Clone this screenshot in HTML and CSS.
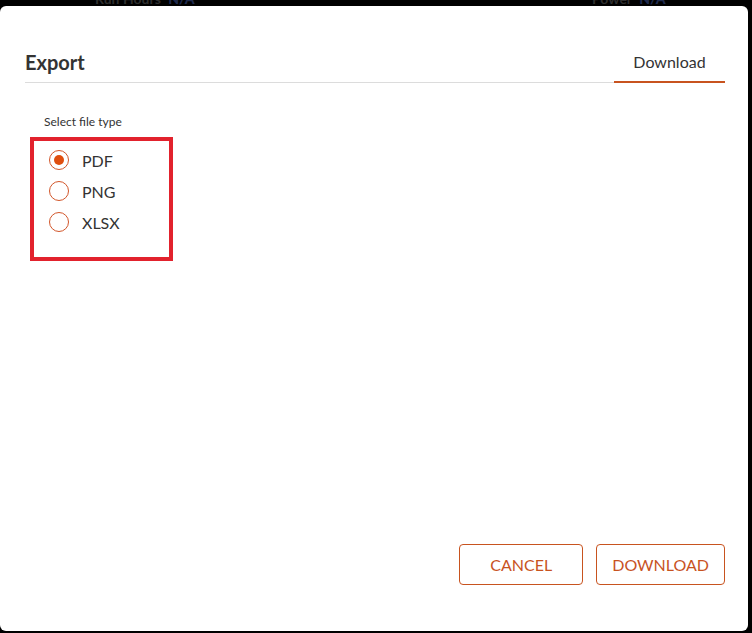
FILE: index.html
```html
<!DOCTYPE html>
<html lang="en">
<head>
    <meta charset="UTF-8">
    <title>Export</title>
    <link rel="stylesheet" href="styles.css">
</head>
<body>
    <div class="backdrop">
        <span class="bg-stat bg-run">Run Hours <b>N/A</b></span>
        <span class="bg-stat bg-power">Power <b>N/A</b></span>
    </div>

    <div class="dialog">
        <div class="dialog-header">
            <h2 class="dialog-title">Export</h2>
            <div class="tab active">Download</div>
        </div>

        <div class="dialog-body">
            <p class="field-label">Select file type</p>
            <div class="radio-group">
                <label class="radio">
                    <input type="radio" name="filetype" value="pdf" checked>
                    <span class="radio-mark"></span>
                    PDF
                </label>
                <label class="radio">
                    <input type="radio" name="filetype" value="png">
                    <span class="radio-mark"></span>
                    PNG
                </label>
                <label class="radio">
                    <input type="radio" name="filetype" value="xlsx">
                    <span class="radio-mark"></span>
                    XLSX
                </label>
            </div>
        </div>

        <div class="dialog-footer">
            <button class="btn">CANCEL</button>
            <button class="btn">DOWNLOAD</button>
        </div>
    </div>
</body>
</html>
```

FILE: styles.css
```css
body {
    margin: 0;
    height: 633px;
    background-color: #000;
    font-family: Lato, 'Noto Sans', sans-serif;
    color: #333;
    overflow: hidden;
}

.backdrop {
    position: relative;
    height: 6px;
}

.bg-stat {
    position: absolute;
    top: -10px;
    font-size: 14px;
    font-weight: bold;
    color: #2e2e2e;
}

.bg-stat b {
    color: #1f2a4d;
    margin-left: 4px;
}

.bg-run {
    left: 95px;
}

.bg-power {
    left: 592px;
}

.dialog {
    position: absolute;
    top: 6px;
    left: 0;
    width: 748px;
    height: 625px;
    background-color: #fff;
    border-radius: 6px;
    display: flex;
    flex-direction: column;
    box-sizing: border-box;
    padding: 0 23px 0 25px;
}

.dialog-header {
    display: flex;
    justify-content: space-between;
    align-items: flex-end;
    border-bottom: 1px solid #dcdcdc;
    margin-top: 44px;
}

.dialog-title {
    margin: 0 0 8px;
    font-size: 20px;
    font-weight: bold;
    color: #333;
}

.tab {
    width: 111px;
    text-align: center;
    font-size: 16px;
    padding-bottom: 10px;
    margin-bottom: -1px;
    border-bottom: 2px solid #c8531f;
    color: #333;
}

.dialog-body {
    flex: 1;
    padding-left: 5px;
}

.field-label {
    margin: 31px 0 8px 14px;
    font-size: 12px;
    color: #333;
}

.radio-group {
    display: inline-flex;
    flex-direction: column;
    gap: 7px;
    width: 143px;
    box-sizing: border-box;
    border: 4px solid #e2222d;
    padding: 7px 0 23px 15px;
}

.radio {
    display: flex;
    align-items: center;
    font-size: 16px;
    height: 24px;
    cursor: pointer;
}

.radio input {
    display: none;
}

.radio-mark {
    position: relative;
    width: 18px;
    height: 18px;
    border: 1px solid #d2562a;
    border-radius: 50%;
    margin-right: 13px;
}

.radio input:checked + .radio-mark::after {
    content: "";
    position: absolute;
    top: 4px;
    left: 4px;
    width: 10px;
    height: 10px;
    border-radius: 50%;
    background-color: #e04e0e;
}

.dialog-footer {
    display: flex;
    justify-content: flex-end;
    gap: 13px;
    padding-bottom: 46px;
}

.btn {
    height: 41px;
    padding: 0 15px;
    min-width: 124px;
    background: #fff;
    border: 1px solid #c8531f;
    border-radius: 4px;
    color: #c8531f;
    font-family: Lato, 'Noto Sans', sans-serif;
    font-size: 16px;
    cursor: pointer;
}
```
